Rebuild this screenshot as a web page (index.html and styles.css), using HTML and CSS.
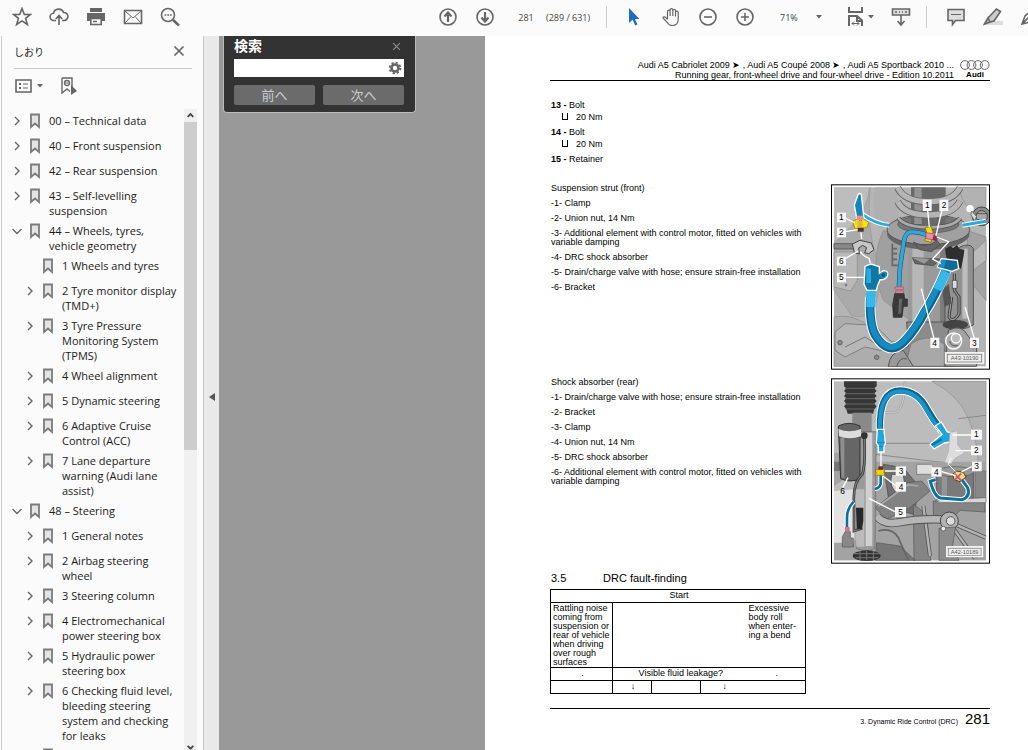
FILE: index.html
```html
<!DOCTYPE html>
<html lang="en">
<head>
    <meta charset="UTF-8">
    <meta name="viewport" content="width=device-width, initial-scale=1.0">
    <title>Running gear - Edition 10.2011</title>
    <link rel="stylesheet" href="styles.css">
</head>
<body>
    <!-- Shared icons -->
    <svg class="sprite" aria-hidden="true">
        <symbol id="bookmark" viewBox="0 0 12 16"><path d="M2 1.5h8v12.5l-4-3.5-4 3.5z" fill="#e4e4e4" stroke="#7b7b7b" stroke-width="1.8"/></symbol>
        <symbol id="right" viewBox="0 0 10 10"><path d="M3 1l4 4-4 4" fill="none" stroke="#666" stroke-width="1.4"/></symbol>
        <symbol id="down" viewBox="0 0 10 10"><path d="M0.5 3L5 7.5 9.5 3" fill="none" stroke="#666" stroke-width="1.4"/></symbol>
        <symbol id="caret" viewBox="0 0 6 4"><path d="M0 0h6L3 3.5z" fill="#666"/></symbol>
        <symbol id="close" viewBox="0 0 12 12"><path d="M1.5 1.5l9 9m0-9l-9 9" fill="none" stroke="currentColor" stroke-width="1.7"/></symbol>
    </svg>

    <header class="toolbar">
        <div class="tool-group">
            <button class="tool" aria-label="Star"><svg viewBox="0 0 20 20"><path d="M10 1.500l2.300 6h6.200l-4.900 3.900 1.800 6.100-5.400-3.600-5.400 3.600 1.800-6.100L1.500 7.500h6.200z"/></svg></button>
            <button class="tool" aria-label="Upload"><svg viewBox="0 0 20 20"><path d="M7 13.500H5a3.600 3.600 0 0 1-.5-7.200A5.300 5.300 0 0 1 14.600 5.500a4 4 0 0 1 .6 8H13M10 18V9M6.800 12L10 8.500l3.200 3.500"/></svg></button>
            <button class="tool" aria-label="Print"><svg viewBox="0 0 20 20"><path class="solid" d="M4 1h12v4H4zM1 6h18v8h-3v-3H4v3H1z"/><path d="M4.800 11.500h10.400v6H4.800zM7 14.500h4"/></svg></button>
            <button class="tool" aria-label="Mail"><svg viewBox="0 0 20 20"><path d="M1.500 3.500h17v13h-17z"/><path class="thin" d="M2 4l8 7 8-7M2 16l6-6.500M18 16l-6-6.500"/></svg></button>
            <button class="tool" aria-label="Find"><svg viewBox="0 0 20 20"><circle cx="8" cy="8" r="6.500"/><path d="M13 13l6 5.500" stroke-width="2.400"/><path d="M4.500 8h1.800m1 0h1.800m1 0h1.600"/></svg></button>
        </div>
        <div class="tool-group page-group">
            <button class="tool" aria-label="Previous page"><svg viewBox="0 0 20 20"><circle cx="10" cy="10" r="8"/><path d="M10 15V6M6.500 9.500L10 5.500l3.500 4" stroke-width="2.200"/></svg></button>
            <button class="tool" aria-label="Next page"><svg viewBox="0 0 20 20"><circle cx="10" cy="10" r="8"/><path d="M10 5v9M6.500 10.500l3.500 4 3.500-4" stroke-width="2.200"/></svg></button>
            <input class="page-input" type="text" value="281" aria-label="Page">
            <span class="page-total">(289 / 631)</span>
        </div>
        <div class="tool-group view-group">
            <button class="tool" aria-label="Select"><svg viewBox="0 0 20 20"><path d="M5 1v15l3.600-3.200 2.600 5.700 2.300-1-2.600-5.500H15.500z" class="blue"/></svg></button>
            <button class="tool" aria-label="Hand"><svg viewBox="0 0 20 20"><path class="hand" d="M6.500 12V4.500a1.200 1.200 0 0 1 2.600 0V3a1.300 1.300 0 0 1 2.700 0v.8a1.300 1.300 0 0 1 2.700 0V5.500a1.300 1.300 0 0 1 2.700 0V12q0 6.500-5.800 6.500-3.300 0-5-2.800L2 11q-.3-1.500 1.500-1.200Q5 10.500 6.500 12.500M9.100 4.500V9M11.800 3.500V9M14.500 5v4.500"/></svg></button>
            <button class="tool" aria-label="Zoom out"><svg viewBox="0 0 20 20"><circle cx="10" cy="10" r="8"/><path d="M6 10h8"/></svg></button>
            <button class="tool" aria-label="Zoom in"><svg viewBox="0 0 20 20"><circle cx="10" cy="10" r="8"/><path d="M6 10h8M10 6v8"/></svg></button>
            <label class="zoom">
                <select aria-label="Zoom"><option>71%</option></select>
                <svg class="caret"><use href="#caret"/></svg>
            </label>
        </div>
        <div class="tool-group fit-group">
            <button class="tool split" aria-label="Fit width">
                <svg viewBox="0 0 20 20"><path d="M3 0v5h13V0M3 19V9h8l5 4.500V19M11 9v5h5" stroke-width="2"/><path d="M6 16.500h7M8 14.500l-2 2 2 2M11 14.500l2 2-2 2" class="thin"/></svg>
                <svg class="caret"><use href="#caret"/></svg>
            </button>
            <button class="tool" aria-label="Scroll"><svg viewBox="0 0 20 20"><path d="M1.500 2h17v6h-17z" fill="#ddd"/><path d="M4 5h2m2 0h1m2 0h1m2 0h2M10 8v9M6.500 14l3.500 4 3.500-4"/></svg></button>
        </div>
        <div class="tool-group note-group">
            <button class="tool" aria-label="Comment"><svg viewBox="0 0 20 20"><path d="M2 2.500h16v11h-8.500l-3 4v-4H2z" fill="#ddd"/><path d="M5 7.500h10" class="thin"/></svg></button>
            <button class="tool" aria-label="Highlight"><svg viewBox="0 0 20 20"><path d="M6 14h14v4H2z" class="pale"/><path d="M5 11L13.500 2l4 2.500L11 14l-4 1zM5 11l2 4-5.500 2z" fill="#ccc"/></svg></button>
            <button class="tool" aria-label="Sign"><svg viewBox="0 0 20 20"><path d="M2 17l3-8 7-6 5 5-7 7zM2 17l7-7"/></svg></button>
        </div>
    </header>

    <main class="workspace">
        <aside class="sidebar">
            <div class="panel">
                <div class="panel-head">
                    <h2>しおり</h2>
                    <button class="panel-close" aria-label="Close"><svg><use href="#close"/></svg></button>
                </div>
                <div class="panel-tools">
                    <button aria-label="Options">
                        <svg class="list-icon" viewBox="0 0 18 14"><path d="M1 1h15v12H1z" fill="none" stroke="#666" stroke-width="1.600"/><path d="M4 4h2v2H4zM4 8h2v2H4zM8 4.500h5v1H8zM8 8.500h5v1H8z" fill="#666"/></svg>
                        <svg class="caret"><use href="#caret"/></svg>
                    </button>
                    <button aria-label="Find current bookmark">
                        <svg class="find-icon" viewBox="0 0 18 18"><path d="M2 1h10v9M2 1v15l5-4 3 2.500" fill="none" stroke="#666" stroke-width="1.400"/><circle cx="7" cy="6" r="2.500" fill="none" stroke="#666" stroke-width="1.300"/><path d="M4 6h6" stroke="#666"/><path d="M11 8v10l6-4z" fill="#666"/></svg>
                    </button>
                </div>
                <div class="tree-wrap">
                    <ul class="tree">
                        <li><svg class="arrow"><use href="#right"/></svg><svg class="mark"><use href="#bookmark"/></svg><a href="#">00 – Technical data</a></li>
                        <li><svg class="arrow"><use href="#right"/></svg><svg class="mark"><use href="#bookmark"/></svg><a href="#">40 – Front suspension</a></li>
                        <li><svg class="arrow"><use href="#right"/></svg><svg class="mark"><use href="#bookmark"/></svg><a href="#">42 – Rear suspension</a></li>
                        <li><svg class="arrow"><use href="#right"/></svg><svg class="mark"><use href="#bookmark"/></svg><a href="#">43 – Self-levelling<br>suspension</a></li>
                        <li><svg class="arrow"><use href="#down"/></svg><svg class="mark"><use href="#bookmark"/></svg><a href="#">44 – Wheels, tyres,<br>vehicle geometry</a></li>
                        <li class="sub"><span class="arrow"></span><svg class="mark"><use href="#bookmark"/></svg><a href="#">1 Wheels and tyres</a></li>
                        <li class="sub"><svg class="arrow"><use href="#right"/></svg><svg class="mark"><use href="#bookmark"/></svg><a href="#">2 Tyre monitor display<br>(TMD+)</a></li>
                        <li class="sub"><svg class="arrow"><use href="#right"/></svg><svg class="mark"><use href="#bookmark"/></svg><a href="#">3 Tyre Pressure<br>Monitoring System<br>(TPMS)</a></li>
                        <li class="sub"><svg class="arrow"><use href="#right"/></svg><svg class="mark"><use href="#bookmark"/></svg><a href="#">4 Wheel alignment</a></li>
                        <li class="sub"><svg class="arrow"><use href="#right"/></svg><svg class="mark"><use href="#bookmark"/></svg><a href="#">5 Dynamic steering</a></li>
                        <li class="sub"><svg class="arrow"><use href="#right"/></svg><svg class="mark"><use href="#bookmark"/></svg><a href="#">6 Adaptive Cruise<br>Control (ACC)</a></li>
                        <li class="sub"><svg class="arrow"><use href="#right"/></svg><svg class="mark"><use href="#bookmark"/></svg><a href="#">7 Lane departure<br>warning (Audi lane<br>assist)</a></li>
                        <li><svg class="arrow"><use href="#down"/></svg><svg class="mark"><use href="#bookmark"/></svg><a href="#">48 – Steering</a></li>
                        <li class="sub"><svg class="arrow"><use href="#right"/></svg><svg class="mark"><use href="#bookmark"/></svg><a href="#">1 General notes</a></li>
                        <li class="sub"><svg class="arrow"><use href="#right"/></svg><svg class="mark"><use href="#bookmark"/></svg><a href="#">2 Airbag steering<br>wheel</a></li>
                        <li class="sub"><svg class="arrow"><use href="#right"/></svg><svg class="mark"><use href="#bookmark"/></svg><a href="#">3 Steering column</a></li>
                        <li class="sub"><svg class="arrow"><use href="#right"/></svg><svg class="mark"><use href="#bookmark"/></svg><a href="#">4 Electromechanical<br>power steering box</a></li>
                        <li class="sub"><svg class="arrow"><use href="#right"/></svg><svg class="mark"><use href="#bookmark"/></svg><a href="#">5 Hydraulic power<br>steering box</a></li>
                        <li class="sub"><svg class="arrow"><use href="#right"/></svg><svg class="mark"><use href="#bookmark"/></svg><a href="#">6 Checking fluid level,<br>bleeding steering<br>system and checking<br>for leaks</a></li>
                        <li class="sub"><span class="arrow"></span><svg class="mark"><use href="#bookmark"/></svg></li>
                    </ul>
                    <div class="scrollbar">
                        <svg class="scroll-arrow" viewBox="0 0 14 13"><path d="M4 8l3-3 3 3" fill="none" stroke="#444" stroke-width="2"/></svg>
                        <div class="thumb"></div>
                        <svg class="scroll-arrow" viewBox="0 0 14 13"><path d="M4 9l3 3 3-3" fill="none" stroke="#444" stroke-width="2"/></svg>
                    </div>
                </div>
            </div>
        </aside>
        <button class="collapse" aria-label="Collapse panel"><svg viewBox="0 0 6 8"><path d="M6 0v8L0 4z" fill="#555"/></svg></button>

        <div class="pasteboard">
            <form class="search">
                <div class="search-head">
                    <label for="query">検索</label>
                    <button type="button" class="search-close" aria-label="Close"><svg><use href="#close"/></svg></button>
                </div>
                <div class="search-box">
                    <input id="query" type="text">
                    <svg viewBox="0 0 14 14"><circle cx="7" cy="7" r="3.500" fill="none" stroke="#666" stroke-width="2.600"/><circle cx="7" cy="7" r="5.400" fill="none" stroke="#666" stroke-width="1.800" stroke-dasharray="2.200 2.040"/></svg>
                </div>
                <div class="search-buttons">
                    <button type="button">前へ</button>
                    <button type="button">次へ</button>
                </div>
            </form>
        </div>

        <article class="page">
            <header class="page-head">
                <p>Audi A5 Cabriolet 2009 ➤ , Audi A5 Coupé 2008 ➤ , Audi A5 Sportback 2010 ...<br>Running gear, front-wheel drive and four-wheel drive - Edition 10.2011</p>
                <div class="brand">
                    <svg viewBox="0 0 30 10"><g fill="none" stroke="#666" stroke-width="1"><circle cx="5" cy="5" r="4.400"/><circle cx="11.500" cy="5" r="4.400"/><circle cx="18" cy="5" r="4.400"/><circle cx="24.700" cy="5" r="4.400"/></g></svg>
                    <strong>Audi</strong>
                </div>
            </header>

            <dl class="parts">
                <dt><b>13 -</b> Bolt</dt>
                <dd><span class="box"></span>20 Nm</dd>
                <dt><b>14 -</b> Bolt</dt>
                <dd><span class="box"></span>20 Nm</dd>
                <dt><b>15 -</b> Retainer</dt>
            </dl>

            <section class="figure-row">
                <div class="legend">
                    <h3>Suspension strut (front)</h3>
                    <p>-1- Clamp</p>
                    <p>-2- Union nut, 14 Nm</p>
                    <p>-3- Additional element with control motor, fitted on vehicles with<br>variable damping</p>
                    <p>-4- DRC shock absorber</p>
                    <p>-5- Drain/charge valve with hose; ensure strain-free installation</p>
                    <p>-6- Bracket</p>
                </div>
                <svg class="figure" viewBox="18 12 477 556" role="img" aria-label="Suspension strut, front">
                    <rect x="18" y="12" width="477" height="556" fill="#fff"/>
                    <rect x="27" y="21" width="456" height="537" fill="#b5b5b5"/>
                    <!-- wheel housing -->
                    <path d="M27 21h105q-10 90-50 130l-55 30z" fill="#bdbdbd"/>
                    <path d="M135 21q-10 130 20 210 20 60 0 130-20 60-75 45L27 330V190l60-60q40-50 48-109z" fill="#aaa" stroke="#999" stroke-width="2"/>
                    <path d="M27 215h70v85l-20 32-50-12z" fill="#b9b9b9" stroke="#888" stroke-width="2"/>
                    <path d="M150 21h70v120h-60q-20-60-10-120z" fill="#b0b0b0"/>
                    <path d="M175 150q-45 100 0 210l80 60V180z" fill="#a0a0a0" stroke="#8c8c8c" stroke-width="2"/>
                    <path d="M202 190v65h16M202 205h14M202 220h14M202 237h14" fill="none" stroke="#666" stroke-width="5"/>
                    <path d="M400 21q15 70 83 100v-100z" fill="#b2b2b2" stroke="#8c8c8c" stroke-width="2"/>
                    <path d="M425 150l58 20v190l-50-60z" fill="#a3a3a3" stroke="#858585" stroke-width="2"/>
                    <path d="M445 215l38-35v60l-38 30z" fill="#bbb" stroke="#888" stroke-width="2"/>
                    <path d="M27 410q50-10 95 20l60 50 60 10v68H27z" fill="#adadad" stroke="#888" stroke-width="2"/>
                    <path d="M30 455l30-25 90 5 50 50-10 30-70-15-60 30-30-20z" fill="#b7b7b7" stroke="#666" stroke-width="2"/>
                    <path d="M60 500l60-30 80 50" fill="none" stroke="#777" stroke-width="3"/>
                    <circle cx="45" cy="487" r="7" fill="#888" stroke="#555" stroke-width="2"/>
                    <circle cx="155" cy="531" r="7" fill="#888" stroke="#555" stroke-width="2"/>
                    <circle cx="63" cy="314" r="4" fill="#777"/>
                    <path d="M27 190h60v16H27z" fill="#888" stroke="#444" stroke-width="2"/>
                    <!-- right knuckle -->
                    <circle cx="470" cy="108" r="28" fill="#8b8b8b" stroke="#444" stroke-width="3"/>
                    <circle cx="470" cy="108" r="17" fill="#aaa" stroke="#444" stroke-width="3"/>
                    <path d="M452 100h31M456 118h27" stroke="#555" stroke-width="3"/>
                    <circle cx="435" cy="85" r="11" fill="#fff"/>
                    <path d="M440 92l14 16-4 14-12-18z" fill="#ddd" stroke="#555" stroke-width="2"/>
                    <!-- strut body -->
                    <path d="M248 170h112v260H248z" fill="#9a9a9a"/>
                    <path d="M262 170h34v260h-34z" fill="#b7b7b7"/>
                    <path d="M345 170h18v260h-18z" fill="#7c7c7c"/>
                    <path d="M245 425h120l20 40v93H190l20-40 40-20z" fill="#8b8b8b" stroke="#555" stroke-width="3"/>
                    <path d="M258 490q50-35 100 0v68H240z" fill="#a8a8a8" stroke="#666" stroke-width="2"/>
                    <path d="M190 558q5-45 45-48l30 48M215 558q10-30 30-22" fill="#999" stroke="#555" stroke-width="3"/>
                    <!-- lower spring plate -->
                    <ellipse cx="310" cy="160" rx="124" ry="48" fill="#666"/>
                    <ellipse cx="310" cy="148" rx="124" ry="45" fill="#a0a0a0" stroke="#555" stroke-width="3"/>
                    <ellipse cx="310" cy="132" rx="92" ry="26" fill="#777" stroke="#555" stroke-width="2"/>
                    <!-- spring -->
                    <path d="M258 21h104v115H258z" fill="#686868"/>
                    <path d="M268 21h22v110h-22z" fill="#929292"/>
                    <path d="M218 22q20 42 92 42 75 0 95-42M218 64q20 40 92 40 75 0 95-42" fill="none" stroke="#666" stroke-width="21"/>
                    <path d="M218 22q20 42 92 42 75 0 95-42M218 64q20 40 92 40 75 0 95-42" fill="none" stroke="#b5b5b5" stroke-width="16"/>
                    <path d="M220 113q20 28 92 28 75 0 93-28" fill="none" stroke="#555" stroke-width="14"/>
                    <path d="M220 113q20 28 92 28 75 0 93-28" fill="none" stroke="#aaa" stroke-width="9"/>
                    <path d="M264 185q40 22 72-5l8 12-24 22-36-6zM262 232l84 4-20 20-56-6z" fill="#666" stroke="#444" stroke-width="2"/>
                    <path d="M262 232l52 3-16 15z" fill="#999"/>
                    <!-- additional element -->
                    <path d="M405 200q28-14 40 4v230q-35 22-85 5V270z" fill="#919191" stroke="#555" stroke-width="3"/>
                    <path d="M412 205h16v210h-16z" fill="#bdbdbd"/>
                    <ellipse cx="391" cy="433" rx="38" ry="14" fill="#444"/>
                    <path d="M360 205l16-8 8 6 12-9 8 12 14 2-2 18-8 40-24-20-20-12z" fill="#2e2e2e"/>
                    <path d="M388 280v50l14 20v50q-18 30-30 10l8-60" fill="none" stroke="#333" stroke-width="9"/>
                    <path d="M388 280v50l14 20v50q-18 30-30 10l8-60" fill="none" stroke="#999" stroke-width="4"/>
                    <path d="M352 330l20-20 6 60-20 10z" fill="#555"/>
                    <path d="M382 300h14v24h-14z" fill="#ddd" stroke="#333" stroke-width="2"/>
                    <path d="M370 450q40-22 60 18l25 30v60h-95z" fill="#a2a2a2" stroke="#555" stroke-width="3"/>
                    <circle cx="386" cy="482" r="24" fill="#aaa" stroke="#fff" stroke-width="4"/>
                    <circle cx="393" cy="474" r="14" fill="#bbb" stroke="#fff" stroke-width="4"/>
                    <path d="M374 482q4 18 24 14" fill="none" stroke="#555" stroke-width="3"/>
                    <!-- pipes -->
                    <path d="M112 102q38 28 80 33M412 135l71-12" fill="none" stroke="#fff" stroke-width="15"/>
                    <path d="M112 102q38 28 80 33M412 135l71-12" fill="none" stroke="#2baadf" stroke-width="9"/>
                    <path d="M96 118L88 74l11-31q5-7 10 0l8 73z" fill="#1286bd" stroke="#fff" stroke-width="4"/>
                    <path d="M222 320q0-60 12-115 2-46 22-50 20-2 48 8" fill="none" stroke="#33566b" stroke-width="14"/>
                    <path d="M222 320q0-60 12-115 2-46 22-50 20-2 48 8" fill="none" stroke="#2baadf" stroke-width="10"/>
                    <path d="M210 320h26v7h-26zM212 332h24v7h-24z" fill="#e58da2" stroke="#a34b63" stroke-width="2"/>
                    <path d="M209 340h28l2 16h8v22h-12l-4 33h-26l-2-38z" fill="#3a3a3a" stroke="#222" stroke-width="2"/>
                    <path d="M222 355h10l-4 45h-8z" fill="#666"/>
                    <!-- hose -->
                    <path d="M136 350q-4 80 15 115 40 65 85 20 34-34 63-90 30-45 64-125" fill="none" stroke="#fff" stroke-width="32"/>
                    <path d="M136 350q-4 80 15 115 40 65 85 20 34-34 63-90 30-45 64-125" fill="none" stroke="#0b668f" stroke-width="26"/>
                    <path d="M137 350q-4 80 15 115 40 60 82 18 34-34 63-90 30-45 64-125" fill="none" stroke="#158bc1" stroke-width="18"/>
                    <path d="M138 318v62M338 328l26-54" fill="none" stroke="#37b8ea" stroke-width="28"/>
                    <path d="M120 258l18-7 25 8v20l12-8q18 0 12 17-8 12-22 10l-8 20-3 12h-28l-9-18z" fill="#0e77a6" stroke="#fff" stroke-width="4"/>
                    <path d="M124 262l14 4v42h-14z" fill="#2ba9dd"/>
                    <circle cx="175" cy="284" r="8" fill="#0a5c83" stroke="#37b8ea" stroke-width="2"/>
                    <path d="M349 235l48 5 4 25-20 8-44-12z" fill="#0e6c98" stroke="#fff" stroke-width="4"/>
                    <path d="M349 238l14 2-6 22-18-4z" fill="#1b8fc3"/>
                    <!-- clamps and nuts -->
                    <path d="M83 122l16-6 8 8 8-9 16 11-4 14-20 7-18-3z" fill="#f2e21c" stroke="#a3921b" stroke-width="3"/>
                    <path d="M97 122h16v18H97z" fill="#e8b63a"/>
                    <path d="M95 106h20v13H95z" fill="#e4908c"/>
                    <path d="M98 142h18v12H98z" fill="#50342f"/>
                    <path d="M108 156l2 20" stroke="#fff" stroke-width="4"/>
                    <path d="M301 142l18-4 5 20-6 28-19-5 7-20z" fill="#eadf1c" stroke="#8f8116" stroke-width="3"/>
                    <path d="M303 157l26 4v18l-26-4z" fill="#e791a7" stroke="#9c3e5c" stroke-width="2"/>
                    <path d="M326 163l14 8-6 12-12-5z" fill="#8a2e4e"/>
                    <path d="M335 170l36 14-48 52 25 14" fill="none" stroke="#fff" stroke-width="4"/>
                    <path d="M82 191l23-11 34 8 8 20-16 12-12-3 6-15-12-7-12 8 2 18-15-4z" fill="#c7c7c7" stroke="#444" stroke-width="3"/>
                    <path d="M106 214q6 12 26 20l4 14" fill="none" stroke="#fff" stroke-width="4"/>
                    <!-- callouts -->
                    <path d="M60 113l30 15M62 154l36-6M62 234l38-22M62 291h58M308 90l5 50M352 84l-19 82M289 325l38 150M420 380l28 94" stroke="#fff" stroke-width="4"/>
                    <g class="tag"><rect x="36" y="97" width="27" height="29"/><rect x="36" y="142" width="27" height="29"/><rect x="36" y="229" width="27" height="27"/><rect x="36" y="277" width="27" height="29"/><rect x="293" y="58" width="27" height="34"/><rect x="343" y="58" width="27" height="34"/><rect x="316" y="472" width="27" height="31"/><rect x="435" y="472" width="27" height="31"/></g>
                    <g class="tag-text"><text x="49" y="120">1</text><text x="49" y="165">2</text><text x="49" y="251">6</text><text x="49" y="300">5</text><text x="307" y="84">1</text><text x="357" y="84">2</text><text x="329" y="497">4</text><text x="448" y="497">3</text></g>
                    <rect x="361" y="517" width="115" height="32" fill="#ddd" stroke="#fff" stroke-width="3"/>
                    <rect x="367" y="522" width="103" height="23" fill="#eee" stroke="#777" stroke-width="2"/>
                    <text class="code" x="419" y="540">A43-10190</text>
                    <rect x="19.500" y="13.500" width="474" height="553" fill="none" stroke="#000" stroke-width="3"/>
                </svg>
            </section>

            <section class="figure-row">
                <div class="legend">
                    <h3>Shock absorber (rear)</h3>
                    <p>-1- Drain/charge valve with hose; ensure strain-free installation</p>
                    <p>-2- Bracket</p>
                    <p>-3- Clamp</p>
                    <p>-4- Union nut, 14 Nm</p>
                    <p>-5- DRC shock absorber</p>
                    <p>-6- Additional element with control motor, fitted on vehicles with<br>variable damping</p>
                </div>
                <svg class="figure" viewBox="18 12 477 556" role="img" aria-label="Shock absorber, rear">
                    <rect x="18" y="12" width="477" height="556" fill="#fff"/>
                    <rect x="27" y="21" width="456" height="537" fill="#bcbcbc"/>
                    <!-- body panels -->
                    <path d="M240 21q-2 90-32 93-55-3-65 30" fill="none" stroke="#999" stroke-width="7"/>
                    <path d="M240 21q-2 90-32 93-55-3-65 30" fill="none" stroke="#c9c9c9" stroke-width="4"/>
                    <path d="M320 21q80 40 110 110 30 70 30 160h23V21z" fill="#b0b0b0" stroke="#8c8c8c" stroke-width="2"/>
                    <path d="M400 133l83-10M180 207h140M150 240l210 25" stroke="#8b8b8b" stroke-width="3"/>
                    <path d="M27 235h30v80l-30 20zM150 262h333v296H27v-60h123z" fill="#a3a3a3"/>
                    <path d="M27 350l60-5v160H27z" fill="#e2e2e2"/>
                    <path d="M27 262h25v28H27z" fill="#777"/>
                    <!-- rear axle parts -->
                    <path d="M175 270l60 10 50 60-20 80-70-20z" fill="#707070" stroke="#444" stroke-width="2"/>
                    <path d="M200 300q-10 40 20 60 25-15 15-60z" fill="#d0d0d0" stroke="#555" stroke-width="3"/>
                    <path d="M150 400l95-75 45-5 25 30-60 50-70 35z" fill="#828282" stroke="#555" stroke-width="2"/>
                    <path d="M160 395l90-64 30 4" fill="none" stroke="#aaa" stroke-width="5"/>
                    <path d="M335 290h110v85q-50 22-110 0z" fill="#7a7a7a" stroke="#444" stroke-width="2"/>
                    <path d="M350 300h16v78h-16z" fill="#949494"/>
                    <ellipse cx="390" cy="292" rx="56" ry="15" fill="#999" stroke="#555" stroke-width="2"/>
                    <path d="M275 270h45l20 30h-65z" fill="#ddd" stroke="#666" stroke-width="2"/>
                    <path d="M450 290h33v80h-33z" fill="#888" stroke="#666" stroke-width="2"/>
                    <path d="M265 390l40 30 12 138h-50zM325 380l155 5v28l-75-5-40 40-40-20z" fill="#858585" stroke="#555" stroke-width="2"/>
                    <path d="M295 395l20 150M390 450l92 40M385 462l65 90" stroke="#555" stroke-width="12"/>
                    <path d="M295 395l20 150M390 450l92 40M385 462l65 90" stroke="#b3b3b3" stroke-width="7"/>
                    <path d="M155 505l70 10 45 43H150z" fill="#777" stroke="#555" stroke-width="2"/>
                    <path d="M160 470q40-12 60 20l30 68" fill="none" stroke="#666" stroke-width="5"/>
                    <path d="M330 378l153-8v15H345z" fill="#d5d5d5" stroke="#666" stroke-width="2"/>
                    <!-- stabiliser -->
                    <path d="M155 425q20 26 60 20 80-15 165-8" fill="none" stroke="#555" stroke-width="25"/>
                    <path d="M155 425q20 26 60 20 80-15 165-8" fill="none" stroke="#b6b6b6" stroke-width="20"/>
                    <circle cx="373" cy="440" r="27" fill="#b3b3b3" stroke="#444" stroke-width="3"/>
                    <circle cx="377" cy="440" r="13" fill="#ddd" stroke="#555" stroke-width="3"/>
                    <path d="M342 462l50-4-10 60 20 40h-60z" fill="#8c8c8c" stroke="#555" stroke-width="2"/>
                    <circle cx="355" cy="463" r="7" fill="#eee" stroke="#444" stroke-width="2"/>
                    <!-- bellows -->
                    <path d="M57 21h98v15l-7 6 7 8-7 7 7 8-7 7 7 8-7 8 7 8-7 9-4 13H68l-4-13-7-9 7-8-7-8 7-8-7-7 7-8-7-7 7-8-7-6z" fill="#373737"/>
                    <path d="M60 42h90M60 58h90M60 73h90M60 89h90M62 104h86" stroke="#666" stroke-width="3"/>
                    <!-- shock absorber tube -->
                    <path d="M82 115h58v60H82z" fill="#898989"/>
                    <path d="M90 172h64l-4 350q-25 14-56 0z" fill="#9a9a9a" stroke="#666" stroke-width="2"/>
                    <path d="M122 175h20v340h-20z" fill="#d0d0d0"/>
                    <path d="M84 345h34v172H94z" fill="#bbb"/>
                    <ellipse cx="125" cy="544" rx="42" ry="16" fill="#333"/>
                    <path d="M85 538h80M92 550h68M105 530v28M125 530v28M145 530v28" stroke="#777" stroke-width="3"/>
                    <!-- additional element -->
                    <path d="M40 155q32-16 65 0v158q-30 14-58 0z" fill="#666" stroke="#333" stroke-width="3"/>
                    <path d="M46 190h12v120H50z" fill="#8f8f8f"/>
                    <path d="M40 164q32 14 68 0v22q-36 12-66 0z" fill="#ddd"/>
                    <path d="M118 190q4 80-6 110-30 25-25 90v80l25-8" fill="none" stroke="#333" stroke-width="8"/>
                    <path d="M118 190q4 80-6 110-30 25-25 90v80l25-8" fill="none" stroke="#777" stroke-width="4"/>
                    <circle cx="118" cy="184" r="10" fill="#333"/>
                    <path d="M93 400h22v40l-4 25H95z" fill="#282828"/>
                    <!-- left pipe -->
                    <path d="M167 300v28q-2 12-18 16M86 382q-20 20-20 48v30" fill="none" stroke="#fff" stroke-width="14"/>
                    <path d="M167 300v28q-2 12-18 16M86 382q-20 20-20 48v30" fill="none" stroke="#0f6f9c" stroke-width="8"/>
                    <path d="M60 458h14v12H60z" fill="#d9708f"/>
                    <path d="M60 472h16v18l9 2v26H52v-30z" fill="#888" stroke="#555" stroke-width="2"/>
                    <!-- hose -->
                    <path d="M165 170Q160 48 226 48q52 2 80 55 18 34 46 67" fill="none" stroke="#fff" stroke-width="25"/>
                    <path d="M165 170Q160 48 226 48q52 2 80 55 18 34 46 67" fill="none" stroke="#0b668f" stroke-width="19"/>
                    <path d="M165 170Q160 51 226 51q50 2 78 55 18 34 46 67" fill="none" stroke="#1a94ca" stroke-width="12"/>
                    <path d="M157 165h20l4 42-4 7v19h-17v-19l-6-8z" fill="#20a7df" stroke="#fff" stroke-width="4"/>
                    <path d="M156 205h24M161 216h15" stroke="#0b75a5" stroke-width="2"/>
                    <path d="M331 155l18-12 18 30 18 4-3 25-24 4-31 18-12-14 36-30z" fill="#1fa5dc" stroke="#fff" stroke-width="4"/>
                    <path d="M320 212l30-17" stroke="#0b75a5" stroke-width="7"/>
                    <path d="M168 235v42" stroke="#fff" stroke-width="4"/>
                    <!-- bracket -->
                    <path d="M375 175l23-6v42l20 26-28 15-12 17-20-6 12-30z" fill="#ddd" stroke="#aaa" stroke-width="2"/>
                    <path d="M378 250l-8 20 25 25" stroke="#fff" stroke-width="3" fill="none"/>
                    <!-- right pipe -->
                    <path d="M332 316l-16 5q12 46 30 50l66 5q25-10 16-36l-20-27" fill="none" stroke="#fff" stroke-width="15"/>
                    <path d="M332 316l-16 5q12 46 30 50l66 5q25-10 16-36l-20-27" fill="none" stroke="#0d719f" stroke-width="9"/>
                    <path d="M383 300l12-10 20 4 8 14-18 14-18-6z" fill="#eadc80" stroke="#58430c" stroke-width="3"/>
                    <path d="M388 298l22 22M408 298l-20 20" stroke="#c9567a" stroke-width="6"/>
                    <path d="M150 285h30l-3 9 3 9h-30l4-9z" fill="#f2cf18" stroke="#9a8110" stroke-width="3"/>
                    <path d="M160 276h14v10h-14z" fill="#673022"/>
                    <!-- callouts -->
                    <path d="M440 182h-58M440 229h-48M440 277l-30 15M350 292l42 12M214 290h-34M214 335l-40-30M210 412l-78-40" stroke="#fff" stroke-width="4"/>
                    <path d="M53 340l16-30" stroke="#fff" stroke-width="4"/>
                    <g class="tag"><rect x="438" y="166" width="33" height="30"/><rect x="438" y="214" width="33" height="29"/><rect x="441" y="262" width="29" height="29"/><rect x="319" y="279" width="31" height="28"/><rect x="212" y="276" width="31" height="28"/><rect x="212" y="323" width="31" height="29"/><rect x="210" y="398" width="33" height="30"/></g>
                    <g class="tag-text"><text x="454" y="189">1</text><text x="454" y="237">2</text><text x="455" y="285">3</text><text x="334" y="301">4</text><text x="228" y="298">3</text><text x="228" y="346">4</text><text x="227" y="422">5</text><text x="53" y="360">6</text></g>
                    <rect x="365" y="517" width="108" height="30" fill="#ddd" stroke="#fff" stroke-width="3"/>
                    <rect x="370" y="522" width="98" height="21" fill="#eee" stroke="#888" stroke-width="2"/>
                    <text class="code" x="419" y="539">A42-10189</text>
                    <rect x="19.500" y="13.500" width="474" height="553" fill="none" stroke="#000" stroke-width="3"/>
                </svg>
            </section>

            <h2 class="section-title"><span>3.5</span>DRC fault-finding</h2>
            <table class="faults">
                <colgroup><col class="c1"><col class="c2"><col class="c3"><col class="c4"><col class="c5"></colgroup>
                <tr><th colspan="5">Start</th></tr>
                <tr class="symptoms">
                    <td>Rattling noise<br>coming from<br>suspension or<br>rear of vehicle<br>when driving<br>over rough<br>surfaces</td>
                    <td colspan="3" class="open"></td>
                    <td class="end">Excessive<br>body roll<br>when enter-<br>ing a bend</td>
                </tr>
                <tr class="mid"><td>.</td><td colspan="3" class="open">Visible fluid leakage?</td><td class="end">.</td></tr>
                <tr class="mid"><td></td><td>↓</td><td></td><td class="open">↓</td><td class="end"></td></tr>
            </table>

            <footer class="page-foot">
                <span>3. Dynamic Ride Control (DRC)</span>
                <span class="number">281</span>
            </footer>
        </article>
    </main>
</body>
</html>
```

FILE: styles.css
```css
* {
    box-sizing: border-box;
}
body {
    margin: 0;
    height: 100vh;
    display: flex;
    flex-direction: column;
    overflow: hidden;
    background-color: #fbfbfb;
    font-family: "Open Sans", "Noto Sans CJK JP", sans-serif;
    font-size: 11px;
    color: #222;
}
button {
    padding: 0;
    border: 0;
    background: none;
    color: #666;
    font: inherit;
}
.sprite {
    display: none;
}
.caret {
    width: 6px;
    height: 4px;
}

/* Toolbar */
.toolbar {
    flex: none;
    display: flex;
    align-items: center;
    height: 36px;
    padding: 0 0 2px 12px;
    overflow: hidden;
}
.tool-group {
    display: flex;
    flex: none;
    align-items: center;
    gap: 17px;
    height: 22px;
}
.tool {
    flex: none;
    height: 20px;
}
.tool svg:first-child {
    display: block;
    width: 20px;
    height: 20px;
    fill: none;
    stroke: #666;
    stroke-width: 1.6;
}
.tool .thin {
    stroke-width: 1;
}
.tool .hand {
    stroke-width: 1.2;
}
.tool .solid {
    fill: #666;
    stroke: none;
}
.tool .blue {
    fill: #1e6fc0;
    stroke: none;
}
.tool .pale {
    fill: #ddd;
    stroke: none;
}
.page-group {
    margin-left: 258px;
}
.page-input {
    width: 28px;
    padding: 0;
    border: 0;
    background: none;
    text-align: center;
    font: 9px "Open Sans", sans-serif;
    color: #444;
}
.page-total {
    width: 60px;
    margin-left: -11px;
    font-size: 9px;
    white-space: nowrap;
    color: #444;
}
.view-group {
    border-left: 1px solid #ccc;
    padding-left: 17px;
}
.zoom {
    display: flex;
    align-items: center;
    margin-left: 8px;
}
.zoom select {
    width: 36px;
    padding: 0;
    border: 0;
    background: none;
    appearance: none;
    font: 9px "Open Sans", sans-serif;
    color: #444;
}
.fit-group {
    margin-left: 24px;
}
.split {
    display: flex;
    align-items: center;
    gap: 2px;
}
.note-group {
    margin-left: 15px;
    border-left: 1px solid #ccc;
    padding-left: 19px;
}

/* Bookmarks */
.workspace {
    flex: 1;
    display: flex;
    min-height: 0;
}
.sidebar {
    flex: none;
    width: 203px;
    padding-left: 1px;
}
.panel {
    height: 100%;
    display: flex;
    flex-direction: column;
    border-left: 1px solid #ccc;
    padding-right: 6px;
}
.panel-head {
    display: flex;
    align-items: center;
    justify-content: space-between;
    height: 33px;
    margin: 0 5px 0 12px;
    padding-bottom: 2px;
    border-bottom: 1px solid #c8c8c8;
}
.panel-head h2 {
    margin: 0;
    font-size: 10px;
    font-weight: normal;
}
.panel-close {
    margin-right: 7px;
}
.panel-close svg {
    display: block;
    width: 12px;
    height: 12px;
}
.panel-tools {
    display: flex;
    align-items: center;
    gap: 17px;
    height: 34px;
    margin-left: 13px;
}
.panel-tools button {
    display: flex;
    align-items: center;
    gap: 4px;
}
.list-icon {
    width: 18px;
    height: 14px;
}
.find-icon {
    width: 18px;
    height: 18px;
}
.tree-wrap {
    flex: 1;
    display: flex;
    min-height: 0;
    margin-top: 6px;
}
.tree {
    flex: 1;
    min-width: 0;
    margin: 0;
    padding: 4px 0 0 10px;
    list-style: none;
    overflow: hidden;
}
.tree li {
    display: flex;
    align-items: flex-start;
    min-height: 25px;
    padding-bottom: 5px;
    line-height: 15px;
}
.tree .sub {
    padding-left: 13px;
}
.tree a {
    color: #1a1a1a;
    text-decoration: none;
    white-space: nowrap;
}
.arrow {
    flex: none;
    width: 10px;
    height: 10px;
    margin: 3px 7px 0 0;
}
.mark {
    flex: none;
    width: 12px;
    height: 16px;
    margin-right: 8px;
}
.scrollbar {
    flex: none;
    width: 13px;
    display: flex;
    flex-direction: column;
    background-color: #f0f0f0;
}
.scroll-arrow {
    flex: none;
    height: 13px;
}
.thumb {
    height: 328px;
    margin-bottom: auto;
    background-color: #cdcdcd;
}
.collapse {
    flex: none;
    width: 16px;
    padding-top: 6px;
    border-left: 1px solid #c8c8c8;
    background-color: #e9e9e9;
}
.collapse svg {
    width: 6px;
    height: 8px;
}

/* Search window */
.pasteboard {
    flex: none;
    width: 266px;
    background-color: #999;
}
.search {
    width: 193px;
    margin-left: 4px;
    padding: 0 11px 7px 10px;
    border: 1px solid #bbb;
    border-top: 0;
    border-radius: 0 0 4px 4px;
    background-color: #333;
}
.search-head {
    display: flex;
    align-items: center;
    justify-content: space-between;
    height: 23px;
    padding-bottom: 3px;
}
.search-head label {
    font-size: 14px;
    font-weight: bold;
    line-height: 20px;
    color: #fff;
}
.search-close {
    margin-right: 3px;
    color: #888;
}
.search-close svg {
    display: block;
    width: 9px;
    height: 9px;
}
.search-box {
    display: flex;
    align-items: center;
    height: 18px;
    padding-right: 2px;
    background-color: #fff;
}
.search-box input {
    flex: 1;
    min-width: 0;
    border: 0;
    padding: 0 4px;
    background: none;
}
.search-box svg {
    width: 14px;
    height: 14px;
}
.search-buttons {
    display: flex;
    gap: 8px;
    margin-top: 8px;
}
.search-buttons button {
    flex: 1;
    height: 20px;
    border-radius: 2px;
    background-color: #6b6b6b;
    color: #ccc;
    font-size: 13px;
    line-height: 18px;
}

/* Document page */
.page {
    flex: 1;
    min-width: 0;
    padding: 24px 38px 0 65px;
    background-color: #fff;
    font-family: "Liberation Sans", Arial, sans-serif;
    font-size: 9px;
    line-height: 9px;
    color: #000;
}
.page p,
.page h3 {
    margin: 0;
    font-size: 9px;
    font-weight: normal;
    white-space: nowrap;
}
.page-head {
    display: flex;
    justify-content: flex-end;
    gap: 6px;
    height: 21px;
    border-bottom: 1px solid #000;
    text-align: right;
}
.page .page-head p {
    line-height: 10px;
}
.brand {
    display: flex;
    flex-direction: column;
    align-items: center;
    width: 30px;
}
.brand svg {
    width: 30px;
    height: 10px;
}
.brand strong {
    font-size: 8px;
    line-height: 10px;
}
.parts {
    height: 83px;
    margin: 20px 0 0 1px;
}
.parts dt {
    margin-bottom: 3px;
}
.parts dd {
    display: flex;
    gap: 8px;
    margin: 0 0 6px 11px;
}
.box {
    width: 6px;
    height: 7px;
    border: 1px solid #000;
    border-top: 0;
}
.figure-row {
    display: flex;
    align-items: flex-start;
    justify-content: space-between;
    margin-bottom: 8px;
}
.legend {
    padding-left: 1px;
}
.legend h3 {
    margin-bottom: 6px;
}
.legend p {
    margin-bottom: 6px;
}
.figure {
    flex: none;
    width: 159px;
    height: 186px;
}
.tag rect {
    fill: #f7f7f7;
}
.tag-text {
    font-size: 25px;
    text-anchor: middle;
}
.code {
    font-size: 17px;
    text-anchor: middle;
    fill: #555;
}
.section-title {
    display: flex;
    margin: 0 0 5px 1px;
    font-size: 11px;
    font-weight: normal;
    line-height: 12px;
}
.section-title span {
    width: 52px;
}
.faults {
    width: 255px;
    border-collapse: collapse;
    table-layout: fixed;
}
.c1 { width: 62px; }
.c2 { width: 39px; }
.c3 { width: 49px; }
.c4 { width: 46px; }
.c5 { width: 59px; }
.faults th,
.faults td {
    height: 13px;
    padding: 1px 0 0 2px;
    border: 1px solid #000;
    font-weight: normal;
    vertical-align: top;
    white-space: nowrap;
}
.faults th {
    text-align: center;
}
.faults .open {
    border-right: 0;
}
.faults .end {
    border-left: 0;
}
.faults .mid td {
    text-align: center;
}
.page-foot {
    display: flex;
    justify-content: flex-end;
    align-items: baseline;
    gap: 7px;
    margin-top: 14px;
    padding-top: 2px;
    border-top: 1px solid #000;
    font-size: 7px;
    line-height: 16px;
}
.page-foot .number {
    font-size: 15px;
}
```
